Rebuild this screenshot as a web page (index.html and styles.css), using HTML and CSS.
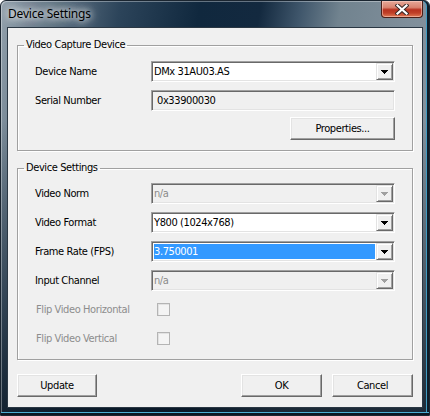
FILE: index.html
```html
<!DOCTYPE html>
<html>
<head>
<meta charset="utf-8">
<title>Device Settings</title>
<link rel="stylesheet" href="styles.css">
</head>
<body>
<div class="window">
  <div class="titlebar">
    <span class="title">Device Settings</span>
    <div class="close">
      <svg width="14" height="11" viewBox="0 0 14 11">
        <path d="M2.5 1.5 L11.5 9.5 M11.5 1.5 L2.5 9.5" stroke="#3a2a28" stroke-width="4.2" stroke-linecap="square" fill="none"/>
        <path d="M2.5 1.5 L11.5 9.5 M11.5 1.5 L2.5 9.5" stroke="#ffffff" stroke-width="2.2" stroke-linecap="square" fill="none"/>
      </svg>
    </div>
  </div>
  <div class="client">
    <fieldset class="group group-capture">
      <legend>Video Capture Device</legend>
      <div class="rows">
        <div class="row">
          <span class="label">Device Name</span>
          <div class="combo">
            <span class="value">DMx 31AU03.AS</span>
            <span class="drop"><svg width="7" height="4" viewBox="0 0 7 4"><path d="M0 0h7v1H0zM1 1h5v1H1zM2 2h3v1H2zM3 3h1v1H3z" fill="#000"/></svg></span>
          </div>
        </div>
        <div class="row">
          <span class="label">Serial Number</span>
          <div class="field readonly"><span class="value">0x33900030</span></div>
        </div>
        <div class="row row-button">
          <button class="btn btn-props">Properties...</button>
        </div>
      </div>
    </fieldset>

    <fieldset class="group group-settings">
      <legend>Device Settings</legend>
      <div class="rows rows-settings">
        <div class="row">
          <span class="label">Video Norm</span>
          <div class="combo disabled">
            <span class="value">n/a</span>
            <span class="drop"><svg width="7" height="4" viewBox="0 0 7 4"><path d="M0 0h7v1H0zM1 1h5v1H1zM2 2h3v1H2zM3 3h1v1H3z" fill="#a0a0a0"/></svg></span>
          </div>
        </div>
        <div class="row">
          <span class="label">Video Format</span>
          <div class="combo">
            <span class="value">Y800 (1024x768)</span>
            <span class="drop"><svg width="7" height="4" viewBox="0 0 7 4"><path d="M0 0h7v1H0zM1 1h5v1H1zM2 2h3v1H2zM3 3h1v1H3z" fill="#000"/></svg></span>
          </div>
        </div>
        <div class="row">
          <span class="label">Frame Rate (FPS)</span>
          <div class="combo focused">
            <span class="value selected">3.750001</span>
            <span class="drop"><svg width="7" height="4" viewBox="0 0 7 4"><path d="M0 0h7v1H0zM1 1h5v1H1zM2 2h3v1H2zM3 3h1v1H3z" fill="#000"/></svg></span>
          </div>
        </div>
        <div class="row">
          <span class="label">Input Channel</span>
          <div class="combo disabled">
            <span class="value">n/a</span>
            <span class="drop"><svg width="7" height="4" viewBox="0 0 7 4"><path d="M0 0h7v1H0zM1 1h5v1H1zM2 2h3v1H2zM3 3h1v1H3z" fill="#a0a0a0"/></svg></span>
          </div>
        </div>
        <div class="row">
          <span class="label label-disabled">Flip Video Horizontal</span>
          <span class="checkbox"></span>
        </div>
        <div class="row">
          <span class="label label-disabled">Flip Video Vertical</span>
          <span class="checkbox"></span>
        </div>
      </div>
    </fieldset>

    <div class="buttons">
      <button class="btn btn-update">Update</button>
      <button class="btn btn-ok">OK</button>
      <button class="btn btn-cancel">Cancel</button>
    </div>
  </div>
</div>
</body>
</html>
```

FILE: styles.css
```css
* { box-sizing: border-box; }

html, body {
  margin: 0;
  padding: 0;
  background: #ffffff;
}

.window {
  width: 430px;
  height: 416px;
  border: 1px solid #1a2530;
  border-radius: 6px 6px 0 0;
  background:
    linear-gradient(to bottom, rgba(0,0,0,0) 0px, rgba(0,0,0,0) 120px, rgba(12,28,44,0.55) 300px, rgba(8,22,36,0.85) 100%),
    linear-gradient(100deg, #94a2ad 0%, #6d7f8e 8%, #2c445a 24%, #10283e 40%, #13293f 52%, #3f566b 60%, #71838f 68%, #7f8e9a 82%, #8896a1 100%);
  box-shadow: inset 0 -2px 0 #0b1722, inset 0 -3px 0 #4aaed4, inset -2px 0 0 #0f1c28, inset -3px 0 0 #3f9cc3, inset 1px 1px 0 rgba(255,255,255,0.35);
  font-family: "DejaVu Sans", "Liberation Sans", sans-serif;
  font-stretch: condensed;
  font-size: 11px;
  letter-spacing: -0.4px;
  color: #000;
  overflow: hidden;
}

.titlebar {
  height: 26px;
  display: flex;
  align-items: flex-start;
  padding: 0 6px 0 7px;
}

.title {
  font-family: "Noto Sans", "Open Sans", sans-serif;
  font-stretch: normal;
  font-size: 12px;
  letter-spacing: -0.2px;
  line-height: 26px;
  color: #000;
  text-shadow: 0 0 6px rgba(255,255,255,0.95), 0 0 10px rgba(255,255,255,0.8), 0 0 14px rgba(255,255,255,0.6);
}

.close {
  margin-left: auto;
  width: 42px;
  height: 17px;
  border: 1px solid #4a1f18;
  border-top: none;
  border-radius: 0 0 4px 4px;
  background: linear-gradient(to bottom, #e6a898 0%, #d98470 40%, #b8321f 55%, #c04028 75%, #e07a55 100%);
  box-shadow: inset 0 0 0 1px rgba(255,220,210,0.5);
  display: flex;
  align-items: center;
  justify-content: center;
}

.close svg { display: block; }

.client {
  margin: 0 6px;
  height: 381px;
  border: 1px solid #2a3743;
  background: #f0f0f0;
  padding: 0 9px;
  display: flex;
  flex-direction: column;
}

.group {
  margin: 10px 0 0 0;
  padding: 0;
  min-width: 0;
  border: 1px solid #a0a0a0;
  box-shadow: inset 1px 1px 0 #fff, 1px 1px 0 #fff;
}

.group legend {
  margin-left: 6px;
  padding: 0 2px;
  line-height: 14px;
  font-size: 11px;
}

.rows {
  display: flex;
  flex-direction: column;
  gap: 8px;
  padding: 9px 17px 10px 17px;
}

.rows-settings {
  padding-top: 8px;
}

.row {
  display: grid;
  grid-template-columns: 116px 244px;
  height: 21px;
  align-items: center;
}

.row-button {
  margin-top: -2px;
  height: 23px;
  grid-template-columns: 360px;
  justify-items: end;
}

.label { white-space: nowrap; }
.label-disabled { color: #8d8d8d; margin-left: 1px; }

.combo, .field {
  height: 21px;
  display: flex;
  align-items: stretch;
  border: 1px solid;
  border-color: #a0a0a0 #ffffff #ffffff #a0a0a0;
  box-shadow: inset 1px 1px 0 #696969, inset -1px -1px 0 #e3e3e3;
  background: #fff;
  padding: 1px;
}

.combo .value {
  flex: 1;
  display: flex;
  align-items: center;
  padding-left: 1px;
  white-space: nowrap;
}

.combo.focused .value.selected {
  background: #3399ff;
  color: #fff;
  margin: 1px;
  padding-left: 0;
}

.combo.disabled {
  background: #f0f0f0;
}

.combo.disabled .value {
  color: #8a8a8a;
}

.field.readonly {
  background: #f0f0f0;
}

.field .value {
  display: flex;
  align-items: center;
  padding-left: 4px;
}

.drop {
  width: 17px;
  height: 17px;
  background: #f0f0f0;
  border: 1px solid;
  border-color: #e3e3e3 #696969 #696969 #e3e3e3;
  box-shadow: inset 1px 1px 0 #fff, inset -1px -1px 0 #a0a0a0;
  display: flex;
  align-items: center;
  justify-content: center;
}

.drop svg { display: block; margin-left: 0px; }

.checkbox {
  width: 13px;
  height: 13px;
  margin-left: 6px;
  border: 1px solid #b4b4b4;
  background: #f4f4f4;
  box-shadow: inset 1px 1px 0 #e2e2e2;
}

.btn {
  font-family: "DejaVu Sans", "Liberation Sans", sans-serif;
  font-stretch: condensed;
  font-size: 11px;
  letter-spacing: -0.4px;
  color: #000;
  height: 23px;
  padding: 0;
  background: #f0f0f0;
  border: 1px solid;
  border-color: #ffffff #696969 #696969 #ffffff;
  box-shadow: inset -1px -1px 0 #a0a0a0, inset 1px 1px 0 #e3e3e3;
  border-radius: 0;
}

.btn-props { width: 105px; }

.buttons {
  margin-top: 14px;
  display: flex;
  gap: 10px;
}

.btn-update { width: 80px; }
.btn-ok { width: 81px; margin-left: auto; }
.btn-cancel { width: 81px; }
```
